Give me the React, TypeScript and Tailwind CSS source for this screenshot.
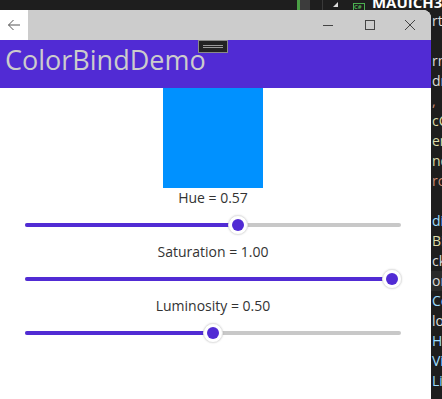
import React from "react";

function Slider({ value }: { value: number }) {
  // track spans 376px; thumb travels from 9px to 367px
  const thumbX = 9 + value * 358;
  return (
    <div className="relative h-[34px] w-[376px]">
      <div className="absolute left-0 right-0 top-[15px] h-[4px] rounded-full bg-[#c8c8c8]" />
      <div
        className="absolute left-0 top-[15px] h-[4px] rounded-full bg-[#512bd4]"
        style={{ width: thumbX }}
      />
      <div
        className="absolute top-[7px] flex h-[20px] w-[20px] items-center justify-center rounded-full border border-[#e4e4e4] bg-white shadow-[0_0_2px_rgba(0,0,0,0.15)]"
        style={{ left: thumbX - 10 }}
      >
        <div className="h-[12px] w-[12px] rounded-full bg-[#512bd4]" />
      </div>
    </div>
  );
}

const sideLines: { t: string; c: string; bg?: string }[] = [
  { t: "rti", c: "#dcdcdc" },
  { t: "", c: "#ddd" },
  { t: "rm", c: "#dcdcdc" },
  { t: "dr", c: "#dcdcdc" },
  { t: ",", c: "#ce9178" },
  { t: "cC", c: "#dcdcaa" },
  { t: "en", c: "#dcdcaa" },
  { t: "nd", c: "#dcdcaa" },
  { t: "rc", c: "#ce9178" },
  { t: "", c: "#ddd" },
  { t: "di", c: "#9cdcfe" },
  { t: "Bi", c: "#dcdcaa" },
  { t: "ck", c: "#dcdcdc" },
  { t: "or", c: "#dcdcdc", bg: "#2b2b2b" },
  { t: "Co", c: "#9cdcfe" },
  { t: "lo", c: "#dcdcdc" },
  { t: "He", c: "#9cdcfe" },
  { t: "Vi", c: "#9cdcfe" },
  { t: "Lis", c: "#9cdcfe" },
];

export default function App() {
  return (
    <div
      className="relative h-[399px] w-[442px] overflow-hidden bg-[#1e1e1e]"
      style={{ fontFamily: '"Open Sans", "Noto Sans", sans-serif' }}
    >
      {/* IDE top strip */}
      <div className="relative flex h-[10px] w-[442px] items-end overflow-hidden">
        <div className="ml-[297px] h-[10px] w-[3px] bg-[#4a9f45]" />
        <div className="h-[10px] w-[10px] bg-[#3c3c3c]" />
        <div className="ml-[12px] h-[10px] w-[1px] bg-[#3a3a3a]" />
        <div className="ml-[10px] mb-[3px] h-0 w-0 border-b-[5px] border-l-[5px] border-b-[#ddd] border-l-transparent" />
        <div className="ml-[15px] h-[7px] w-[12px] border border-b-0 border-[#4caf50] text-[6px] font-bold leading-[6px] text-[#4caf50]">
          C#
        </div>
        <div className="ml-[7px] h-[10px] overflow-hidden">
          <div className="-mt-[6px] text-[15px] font-bold leading-[17px] text-white">MAUICH3</div>
        </div>
      </div>

      <div className="flex">
        {/* App window */}
        <div className="h-[389px] w-[431px] overflow-hidden rounded-tr-[8px] bg-white">
          {/* title bar */}
          <div className="flex h-[30px] bg-[#cccccc]">
            <div className="flex h-[30px] w-[28px] items-center justify-center bg-white">
              <svg width="14" height="12" viewBox="0 0 14 12" fill="none" stroke="#555" strokeWidth="1">
                <path d="M13 6H1.5M6.5 1L1.5 6l5 5" />
              </svg>
            </div>
            <div className="flex-1" />
            <div className="flex h-[30px] w-[46px] items-center justify-center">
              <svg width="10" height="10" viewBox="0 0 10 10" stroke="#444" strokeWidth="1">
                <path d="M0 5.5h10" />
              </svg>
            </div>
            <div className="flex h-[30px] w-[38px] items-center justify-center">
              <svg width="10" height="10" viewBox="0 0 10 10" fill="none" stroke="#444" strokeWidth="1">
                <rect x="0.5" y="0.5" width="9" height="9" />
              </svg>
            </div>
            <div className="flex h-[30px] w-[42px] items-center justify-center">
              <svg width="10" height="10" viewBox="0 0 10 10" stroke="#444" strokeWidth="1">
                <path d="M0 0l10 10M10 0L0 10" />
              </svg>
            </div>
          </div>

          {/* header */}
          <div className="relative h-[48px] bg-[#512bd4] pl-[5px]">
            <div className="text-[27px] font-medium leading-[40px] text-[#cccccc]">ColorBindDemo</div>
            <div className="absolute left-[198px] top-0 flex h-[13px] w-[30px] flex-col items-center justify-center gap-[1px] border border-[#8a8a8a] bg-[#232323]">
              <div className="h-[1px] w-[20px] bg-[#9a9a9a]" />
              <div className="h-[1px] w-[20px] bg-[#9a9a9a]" />
            </div>
          </div>

          {/* content */}
          <div className="flex w-[426px] flex-col items-center text-[14px] text-[#333]">
            <div className="h-[100px] w-[100px] bg-[#0091ff]" />
            <div className="h-[20px] leading-[20px]">Hue = 0.57</div>
            <Slider value={0.57} />
            <div className="h-[20px] leading-[20px]">Saturation = 1.00</div>
            <Slider value={1} />
            <div className="h-[20px] leading-[20px]">Luminosity = 0.50</div>
            <Slider value={0.5} />
          </div>
        </div>

        {/* IDE right strip */}
        <div className="flex w-[11px] flex-col overflow-hidden pt-[1px] text-[14px]">
          {sideLines.map((l, i) => (
            <div
              key={i}
              className="h-[20px] whitespace-nowrap pl-[1px] leading-[20px]"
              style={{ color: l.c, background: l.bg }}
            >
              {l.t}
            </div>
          ))}
        </div>
      </div>
    </div>
  );
}
